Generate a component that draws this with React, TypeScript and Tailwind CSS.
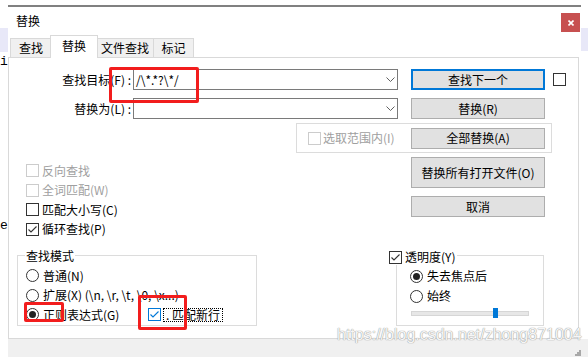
import React from "react";

type BoxProps = { checked?: boolean; disabled?: boolean; focus?: boolean };

function Box({ checked, disabled, focus }: BoxProps) {
  const border = disabled ? "border-[#cccccc]" : focus ? "border-[#0078d7]" : "border-[#333333]";
  return (
    <span className={`flex h-[13px] w-[13px] shrink-0 items-center justify-center border bg-white ${border}`}>
      {checked && (
        <svg width="11" height="11" viewBox="0 0 11 11">
          <path d="M1.5 5.5 L4 8 L9.5 2.5" fill="none" stroke={focus ? "#0078d7" : "#333333"} strokeWidth="1.1" />
        </svg>
      )}
    </span>
  );
}

function Check({ label, checked, disabled }: { label: string; checked?: boolean; disabled?: boolean }) {
  return (
    <div className="flex h-[19.5px] items-center">
      <Box checked={checked} disabled={disabled} />
      <span className={`ml-[3px] ${disabled ? "text-[#a0a0a0]" : "text-black"}`}>{label}</span>
    </div>
  );
}

function Radio({ label, selected, tall }: { label: string; selected?: boolean; tall?: boolean }) {
  return (
    <div className={`flex items-center ${tall ? "h-[20px]" : "h-[19.5px]"}`}>
      <span className="flex h-[13px] w-[13px] shrink-0 items-center justify-center rounded-full border border-[#333333] bg-white">
        {selected && <span className="h-[7px] w-[7px] rounded-full bg-[#222222]" />}
      </span>
      <span className="ml-[4px] whitespace-nowrap">{label}</span>
    </div>
  );
}

function Btn({ children, primary, tall }: { children: React.ReactNode; primary?: boolean; tall?: boolean }) {
  return (
    <div
      className={`flex w-[134px] shrink-0 items-center justify-center bg-[#e1e1e1] ${tall ? "h-[31px]" : "h-[21px]"} ${
        primary ? "border-2 border-[#0078d7]" : "border border-[#adadad]"
      }`}
    >
      {children}
    </div>
  );
}

function Combo({ value }: { value?: string }) {
  return (
    <div className="flex h-[21px] w-[265px] shrink-0 items-center border border-[#7a7a7a] bg-white pl-[2px] pr-[2px]">
      <span className="whitespace-nowrap">{value}</span>
      <svg className="ml-auto" width="9" height="5" viewBox="0 0 9 5">
        <polyline points="0.5,0.5 4.5,4.5 8.5,0.5" fill="none" stroke="#606060" strokeWidth="1" />
      </svg>
    </div>
  );
}

export default function App() {
  return (
    <div className="relative flex h-[357px] w-[588px] overflow-hidden bg-white text-[12px] leading-[16px] text-black [font-family:'Noto_Sans_CJK_SC','Noto_Sans',sans-serif]">
      {/* editor text behind the dialog */}
      <div className="flex w-[8px] shrink-0 flex-col text-[13px] leading-[14px] [font-family:'Liberation_Mono',monospace]">
        <div className="mt-[28px] h-[24px] bg-[#e8e8f8]" />
        <div className="mt-[3px] h-[14px]">i</div>
        <div className="mt-[150px] h-[14px]">e</div>
      </div>

      {/* dialog */}
      <div className="relative flex w-[580px] flex-col">
        <div className="absolute right-0 top-[28px] h-[23px] w-[7px] bg-[#e8e8f8]" />
        <div className="mt-[5px] w-[573px] border-t-2 border-[#808080]" />

        <div className="flex h-[28px] w-[573px]">
          <span className="ml-[8px] mt-[6px]">替换</span>
          <div className="ml-auto mr-[1px] mt-[6px] flex h-[19px] w-[19px] items-center justify-center bg-[#c75050]">
            <svg width="6" height="6" viewBox="0 0 6 6">
              <path d="M0.5 0.5 L5.5 5.5 M5.5 0.5 L0.5 5.5" stroke="white" strokeWidth="1.6" />
            </svg>
          </div>
        </div>

        {/* tabs */}
        <div className="flex h-[22px] items-end pl-[2px]">
          <div className="flex h-[19px] w-[42px] items-center justify-center border border-b-0 border-[#d9d9d9] bg-[#f0f0f0]">查找</div>
          <div className="relative z-10 -mb-px -ml-[2px] flex h-[23px] w-[48px] items-start justify-center border border-b-0 border-[#d9d9d9] bg-white pt-[2px]">
            替换
          </div>
          <div className="-ml-[2px] flex h-[19px] w-[58px] items-center justify-center border border-b-0 border-[#d9d9d9] bg-[#f0f0f0]">文件查找</div>
          <div className="-ml-px flex h-[19px] w-[41px] items-center justify-center border border-b-0 border-[#d9d9d9] bg-[#f0f0f0]">标记</div>
        </div>

        {/* tab panel */}
        <div className="flex h-[282px] w-[571px] flex-col border border-[#d9d9d9]">
          <div className="mt-[11px] flex h-[21px] items-center">
            <span className="w-[124px] pr-[2px] text-right">查找目标(F) :</span>
            <Combo value={"/\\*.*?\\*/"} />
            <div className="ml-[13px]">
              <Btn primary>查找下一个</Btn>
            </div>
            <div className="ml-[8px]">
              <Box />
            </div>
          </div>

          <div className="mt-[8px] flex h-[21px] items-center">
            <span className="w-[124px] pr-[2px] text-right">替换为(L) :</span>
            <Combo />
            <div className="ml-[13px]">
              <Btn>替换(R)</Btn>
            </div>
          </div>

          <div className="mt-[4px] flex">
            <div className="ml-[287px] flex h-[30px] w-[256px] items-center border border-[#dcdcdc] pl-[11px] pr-[6px]">
              <Box disabled />
              <span className="ml-[2px] text-[#a0a0a0]">选取范围内(I)</span>
              <div className="ml-auto">
                <Btn>全部替换(A)</Btn>
              </div>
            </div>
          </div>

          <div className="flex">
            <div className="flex w-[402px] flex-col pl-[17px] pt-[8px]">
              <Check disabled label="反向查找" />
              <Check disabled label="全词匹配(W)" />
              <Check label="匹配大小写(C)" />
              <Check checked label="循环查找(P)" />
            </div>
            <div className="flex flex-col gap-[8px] pt-[4px]">
              <Btn tall>替换所有打开文件(O)</Btn>
              <Btn>取消</Btn>
            </div>
          </div>

          <div className="mt-[16px] flex">
            {/* search mode */}
            <div className="relative ml-[8px] h-[71px] w-[240px] border border-[#dcdcdc] pl-[8px] pt-[10px]">
              <span className="absolute -top-[8px] left-[7px] bg-white px-px">查找模式</span>
              <Radio label="普通(N)" />
              <Radio label={"扩展(X) (\\n, \\r, \\t, \\0, \\x...)"} />
              <div className="flex h-[19.5px] items-center">
                <div className="w-[122px]">
                  <Radio selected label="正则表达式(G)" />
                </div>
                <Box checked focus />
                <span className="ml-[2px] border border-dotted border-black px-[2px] leading-[12px]">. 匹配新行</span>
              </div>
            </div>

            {/* transparency */}
            <div className="relative ml-[139px] h-[71px] w-[148px] border border-[#dcdcdc] pl-[13px] pt-[10px]">
              <div className="absolute -left-[8px] -top-[7px] flex items-center bg-white pr-[2px]">
                <Box checked />
                <span className="ml-[3px]">透明度(Y)</span>
              </div>
              <Radio tall selected label="失去焦点后" />
              <Radio tall label="始终" />
              <div className="relative ml-px mt-[5px] h-[5px] w-[118px] border border-[#d6d6d6] bg-[#e7e7e7]">
                <div className="absolute -top-[4px] left-[81px] h-[10px] w-[5px] bg-[#0078d7]" />
              </div>
            </div>
          </div>
        </div>

        {/* footer */}
        <div className="flex flex-1 justify-end bg-[#f0f0f0] pr-[7px] pt-[11px]">
          <svg width="6" height="6" viewBox="0 0 6 6">
            <rect x="4" y="0" width="2" height="2" fill="#a8a8a8" />
            <rect x="2" y="2" width="2" height="2" fill="#a8a8a8" />
            <rect x="4" y="2" width="2" height="2" fill="#a8a8a8" />
            <rect x="0" y="4" width="2" height="2" fill="#a8a8a8" />
            <rect x="2" y="4" width="2" height="2" fill="#a8a8a8" />
            <rect x="4" y="4" width="2" height="2" fill="#a8a8a8" />
          </svg>
        </div>
      </div>

      {/* red annotation boxes */}
      <div className="absolute left-[109px] top-[67px] h-[36px] w-[90px] rounded-[2px] border-[3px] border-[#f21d1d]" />
      <div className="absolute left-[24px] top-[302px] h-[20px] w-[40px] rounded-[2px] border-[3px] border-[#f21d1d]" />
      <div className="absolute left-[138px] top-[295px] h-[35px] w-[49px] rounded-[2px] border-[3px] border-[#f21d1d]" />

      {/* watermark */}
      <div className="absolute left-[337px] top-[326px] whitespace-nowrap text-[16px] leading-[18px] text-[#f6f6f6] [font-family:'Liberation_Sans',Arial,sans-serif] [text-shadow:0_0_1px_#9a9a9a,0_0_1px_#9a9a9a]">
        https://blog.csdn.net/zhong871004
      </div>
    </div>
  );
}
